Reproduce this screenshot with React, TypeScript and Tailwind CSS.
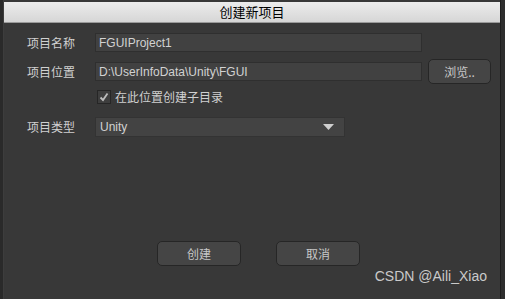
import React from "react";

const font = { fontFamily: '"Noto Sans CJK SC", "Liberation Sans", sans-serif' };

export default function App() {
  return (
    <div className="w-[505px] h-[299px] bg-[#2c2c2c] flex overflow-hidden relative" style={font}>
      <div className="w-[4px] bg-[#2a2a2a] border-r border-[#3d3d3d]" />
      <div className="flex-1 flex flex-col bg-[#383838]">
        <div className="mt-[2px] h-[21px] bg-gradient-to-b from-[#ececec] to-[#d6d6d6] border-b border-[#9a9a9a] flex items-center justify-center text-[13px] text-black">
          创建新项目
        </div>
        <div className="relative flex-1">
          {/* row 1 */}
          <div className="flex items-center mt-[10px] h-[19px]">
            <span className="w-[91px] pl-[23px] text-[12px] text-[#d0d0d0]">项目名称</span>
            <div className="w-[327px] h-[19px] bg-[#414141] border border-[#2f2f2f] text-[12px] text-[#d2d2d2] flex items-center pl-[3px]" style={{ fontFamily: '"Liberation Sans", sans-serif' }}>
              FGUIProject1
            </div>
          </div>
          {/* row 2 */}
          <div className="flex items-center mt-[7px] h-[25px]">
            <span className="w-[91px] pl-[23px] text-[12px] text-[#d0d0d0]">项目位置</span>
            <div className="w-[327px] h-[19px] bg-[#414141] border border-[#2f2f2f] text-[12px] text-[#d2d2d2] flex items-center pl-[3px]" style={{ fontFamily: '"Liberation Sans", sans-serif' }}>
              D:\UserInfoData\Unity\FGUI
            </div>
            <div className="ml-[6px] w-[63px] h-[25px] rounded-[5px] bg-[#454545] border border-[#262626] text-[12px] text-[#c8c8c8] flex items-center justify-center">
              浏览..
            </div>
          </div>
          {/* checkbox */}
          <div className="flex items-center mt-[6px] h-[14px] pl-[93px]">
            <div className="w-[14px] h-[14px] bg-[#3e3e3e] border border-[#262626] flex items-center justify-center">
              <svg width="10" height="10" viewBox="0 0 10 10">
                <path d="M1.5 5.5 L4 8 L8.5 1.5" stroke="#bdbdbd" strokeWidth="1.8" fill="none" />
              </svg>
            </div>
            <span className="ml-[4px] text-[12px] text-[#d0d0d0]">在此位置创建子目录</span>
          </div>
          {/* row 4 */}
          <div className="flex items-center mt-[13px] h-[20px]">
            <span className="w-[91px] pl-[23px] text-[12px] text-[#d0d0d0]">项目类型</span>
            <div className="w-[250px] h-[20px] bg-[#434343] border border-[#333] text-[12px] text-[#d2d2d2] flex items-center pl-[4px] justify-between pr-[10px]" style={{ fontFamily: '"Liberation Sans", sans-serif' }}>
              <span>Unity</span>
              <svg width="11" height="7" viewBox="0 0 11 7">
                <path d="M0 0 H11 L5.5 6 Z" fill="#cfcfcf" />
              </svg>
            </div>
          </div>
          {/* buttons */}
          <div className="flex mt-[104px] pl-[153px] gap-[35px]">
            <div className="w-[84px] h-[25px] rounded-[5px] bg-[#454545] border border-[#262626] text-[12px] text-[#c8c8c8] flex items-center justify-center">创建</div>
            <div className="w-[84px] h-[25px] rounded-[5px] bg-[#454545] border border-[#262626] text-[12px] text-[#c8c8c8] flex items-center justify-center">取消</div>
          </div>
          <div className="absolute right-[13px] bottom-[12px] text-[14px] text-[#cacaca]" style={{ fontFamily: '"Liberation Sans", sans-serif' }}>
            CSDN @Aili_Xiao
          </div>
        </div>
      </div>
      <div className="w-[1px] bg-[#1e1e1e]" />
      <div className="w-[4px] bg-[#2e2e2e]" />
    </div>
  );
}
